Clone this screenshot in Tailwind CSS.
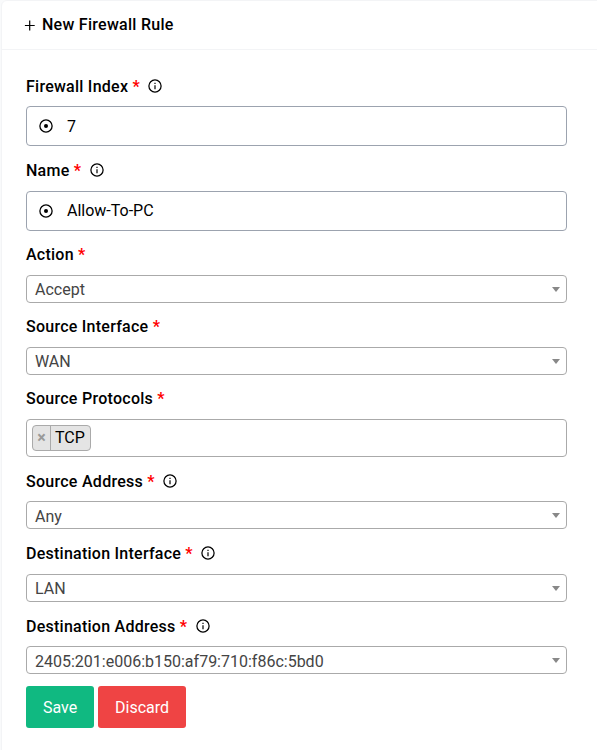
<!DOCTYPE html>
<html lang="en">
<head>
<meta charset="utf-8">
<title>New Firewall Rule</title>
<script src="https://cdn.jsdelivr.net/npm/@tailwindcss/browser@4"></script>
</head>
<body class="h-[750px] overflow-hidden bg-[#f9fafb] font-['Roboto',sans-serif] text-base text-black">
<svg class="hidden">
  <symbol id="info" viewBox="0 0 16 16"><circle cx="8" cy="8" r="6.1" fill="none" stroke="currentColor" stroke-width="1.25"/><path fill="currentColor" d="M7.4 4.7h1.2v1.2H7.4zM7.4 7.3h1.2v4H7.4z"/></symbol>
  <symbol id="target" viewBox="0 0 16 16"><circle cx="8" cy="8" r="6.1" fill="none" stroke="currentColor" stroke-width="1.3"/><circle cx="8" cy="8" r="2" fill="currentColor"/></symbol>
  <symbol id="caret" viewBox="0 0 8 5"><path fill="#888" d="M0 0h8L4 5z"/></symbol>
</svg>
<main class="ml-px h-[760px] w-[610px] rounded-tl-md border border-[#f3f4f6] bg-white">
  <header class="flex h-[49px] items-center border-b border-[#f3f4f6] pl-5">
    <svg class="mr-1 size-4" viewBox="0 0 16 16"><path fill="currentColor" d="M7.1 7.9V3.5h1.2v4.4h4.4v1.2H8.3v4.4H7.1V9.1H2.9V7.9z"/></svg>
    <h1 class="pb-px font-medium tracking-[0.27px]">New Firewall Rule</h1>
  </header>
  <form class="flex w-[565px] flex-col pt-6 pl-6">
    <label class="mb-2 flex h-6 items-center font-medium tracking-[0.25px]"><span class="pt-0.5">Firewall Index&nbsp;<span class="font-bold text-[#ff0000]">*</span></span><svg class="ml-[7.5px] size-4"><use href="#info"/></svg></label>
    <div class="flex h-10 items-center rounded border border-[#9ca3af] pl-[11px]"><svg class="mr-[13px] size-4"><use href="#target"/></svg><span class="pt-0.5">7</span></div>

    <label class="mt-3 mb-[9px] flex h-6 items-center font-medium tracking-[0.25px]"><span class="pt-0.5">Name&nbsp;<span class="font-bold text-[#ff0000]">*</span></span><svg class="ml-2 size-4"><use href="#info"/></svg></label>
    <div class="flex h-10 items-center rounded border border-[#9ca3af] pl-[11px]"><svg class="mr-[13px] size-4"><use href="#target"/></svg><span class="pb-px">Allow-To-PC</span></div>

    <label class="mt-3 mb-2 flex h-6 items-center font-medium tracking-[0.25px]">Action&nbsp;<span class="font-bold text-[#ff0000]">*</span></label>
    <div class="flex h-7 items-center justify-between rounded border border-[#aaa] pr-1.5 pl-2 text-[#444]"><span class="pt-0.5">Accept</span><svg class="h-[5px] w-2"><use href="#caret"/></svg></div>

    <label class="mt-3 mb-2 flex h-6 items-center font-medium tracking-[0.25px]">Source Interface&nbsp;<span class="font-bold text-[#ff0000]">*</span></label>
    <div class="flex h-7 items-center justify-between rounded border border-[#aaa] pr-1.5 pl-2 text-[#444]"><span class="pt-0.5">WAN</span><svg class="h-[5px] w-2"><use href="#caret"/></svg></div>

    <label class="mt-3 mb-2 flex h-6 items-center font-medium tracking-[0.27px]">Source Protocols&nbsp;<span class="font-bold text-[#ff0000]">*</span></label>
    <div class="flex h-[38px] items-center rounded border border-[#aaa] pl-[5px]">
      <div class="flex h-[26px] items-center rounded border border-[#aaa] bg-[#e4e4e4]"><span class="flex h-6 w-[18px] items-center justify-center border-r border-[#aaa] font-bold text-[#999]">×</span><span class="px-[5px] pl-1">TCP</span></div>
    </div>

    <label class="mt-3 mb-2 flex h-6 items-center font-medium tracking-[0.27px]"><span class="pt-0.5">Source Address&nbsp;<span class="font-bold text-[#ff0000]">*</span></span><svg class="ml-[7px] size-4"><use href="#info"/></svg></label>
    <div class="flex h-7 items-center justify-between rounded border border-[#aaa] pr-1.5 pl-2 text-[#444]"><span class="pt-[3px]">Any</span><svg class="h-[5px] w-2"><use href="#caret"/></svg></div>

    <label class="mt-[13px] mb-2 flex h-6 items-center font-medium tracking-[0.25px]"><span>Destination Interface&nbsp;<span class="font-bold text-[#ff0000]">*</span></span><svg class="mb-0.5 ml-[7.5px] size-4"><use href="#info"/></svg></label>
    <div class="flex h-7 items-center justify-between rounded border border-[#aaa] pr-1.5 pl-2 text-[#444]"><span class="pt-0.5">LAN</span><svg class="h-[5px] w-2"><use href="#caret"/></svg></div>

    <label class="mt-3 mb-2 flex h-6 items-center font-medium tracking-[0.25px]"><span class="pt-0.5">Destination Address&nbsp;<span class="font-bold text-[#ff0000]">*</span></span><svg class="ml-2 size-4"><use href="#info"/></svg></label>
    <div class="flex h-7 items-center justify-between rounded border border-[#aaa] pr-1.5 pl-2 text-[#444]"><span class="pt-[3px]">2405:201:e006:b150:af79:710:f86c:5bd0</span><svg class="h-[5px] w-2"><use href="#caret"/></svg></div>

    <div class="mt-3 flex gap-1 text-white">
      <button type="button" class="h-[42px] w-[68px] rounded-[3px] bg-[#10b981] pt-0.5">Save</button>
      <button type="button" class="h-[42px] w-[88px] rounded-[3px] bg-[#ef4444] pt-0.5">Discard</button>
    </div>
  </form>
</main>
</body>
</html>
